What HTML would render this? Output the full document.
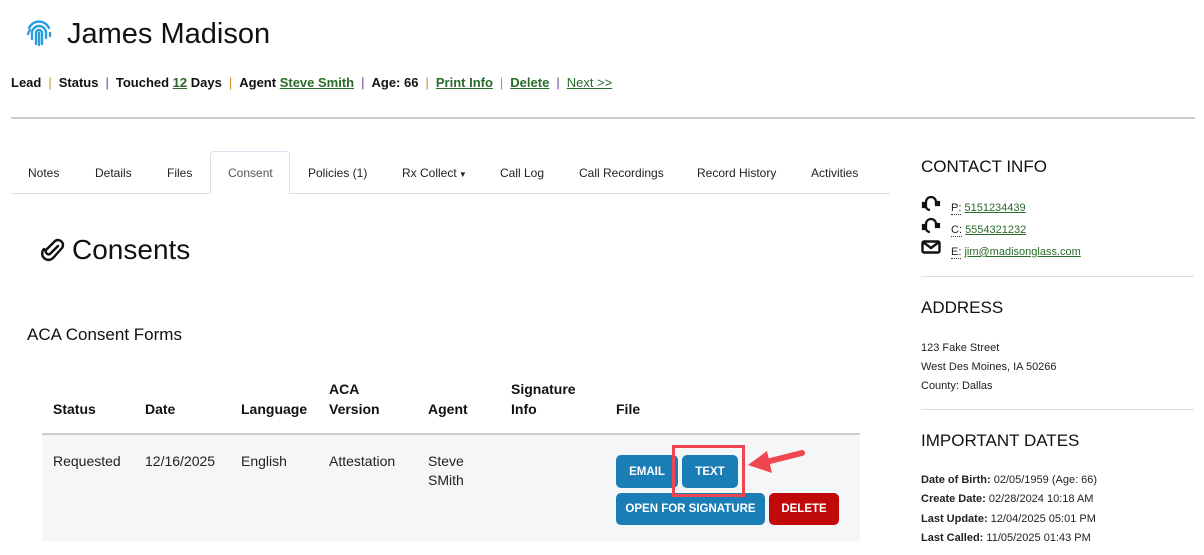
<!DOCTYPE html>
<html><head><style>
*{margin:0;padding:0;box-sizing:border-box}
body{width:1204px;height:555px;overflow:hidden;background:#fff;font-family:"Liberation Sans",sans-serif;color:#111;position:relative}
.a{position:absolute;white-space:nowrap}
a{color:#2a6a2a;text-decoration:underline}
.sep{color:#d08a2a;margin:0 7px;font-weight:normal}
.sep2{color:#6a3a9a;margin:0 7px;font-weight:normal}
.tab{position:absolute;top:166px;font-size:12px;color:#222}
.th{position:absolute;font-size:14px;font-weight:bold;line-height:20px}
.td{position:absolute;font-size:14px;line-height:19px;color:#222}
.btn{position:absolute;border-radius:5px;color:#fff;font-size:11.5px;font-weight:bold;display:flex;align-items:center;justify-content:center}
.side{position:absolute;left:921px;font-size:11px;color:#222}
.h{position:absolute;left:921px;font-size:17px;color:#111}
.dot{border-bottom:1px dotted #333}
</style></head><body>
<svg class="a" style="left:25px;top:19px" width="28" height="28" viewBox="0 0 28 28" fill="none" stroke="#2a9de0" stroke-width="2.4" stroke-linecap="round">
<path d="M4 9 A11 11 0 0 1 24 9"/><path d="M3 15 A11 11 0 0 1 5 11"/><path d="M7 20 V14 A7 7 0 0 1 21 14 V19"/><path d="M11 25 V14 A3 3 0 0 1 17 14 V25"/><path d="M14 14 V26"/><path d="M25 14 V17"/>
</svg>
<div class="a" style="left:67px;top:18px;font-size:29px">James Madison</div>
<div class="a" style="left:11px;top:75px;font-size:13px;font-weight:bold">Lead<span class="sep">|</span>Status<span class="sep2">|</span>Touched <a>12</a> Days<span class="sep">|</span>Agent <a>Steve Smith</a><span class="sep2">|</span>Age: 66<span class="sep">|</span><a>Print Info</a><span class="sep">|</span><a>Delete</a><span class="sep2">|</span><a style="font-weight:normal">Next &gt;&gt;</a></div>
<div class="a" style="left:11px;top:117px;width:1184px;height:2px;background:#ccc"></div>

<div class="a" style="left:11px;top:193px;width:879px;height:1px;background:#dde"></div>
<div class="a" style="left:210px;top:151px;width:80px;height:43px;border:1px solid #dde;border-bottom:1px solid #fff;border-radius:4px 4px 0 0;background:#fff"></div>
<div class="tab" style="left:28px">Notes</div>
<div class="tab" style="left:95px">Details</div>
<div class="tab" style="left:167px">Files</div>
<div class="tab" style="left:228px;color:#555">Consent</div>
<div class="tab" style="left:308px">Policies (1)</div>
<div class="tab" style="left:402px">Rx Collect<span style="font-size:8px"> ▼</span></div>
<div class="tab" style="left:500px">Call Log</div>
<div class="tab" style="left:579px">Call Recordings</div>
<div class="tab" style="left:697px">Record History</div>
<div class="tab" style="left:811px">Activities</div>

<svg class="a" style="left:41px;top:237px" width="26" height="26" viewBox="0 0 26 26" fill="none" stroke="#111" stroke-width="2.4" stroke-linecap="round"><path d="M17 9 L9 17 A3 3 0 0 1 5 13 L14 4 A5 5 0 0 1 21 11 L12 21 A6 6 0 0 1 3 12"/></svg>
<div class="a" style="left:72px;top:234px;font-size:28px">Consents</div>
<div class="a" style="left:27px;top:325px;font-size:17px">ACA Consent Forms</div>

<div class="th" style="left:53px;top:399px">Status</div>
<div class="th" style="left:145px;top:399px">Date</div>
<div class="th" style="left:241px;top:399px">Language</div>
<div class="th" style="left:329px;top:379px">ACA<br>Version</div>
<div class="th" style="left:428px;top:399px">Agent</div>
<div class="th" style="left:511px;top:379px">Signature<br>Info</div>
<div class="th" style="left:616px;top:399px">File</div>
<div class="a" style="left:42px;top:433px;width:818px;height:2px;background:#ccc"></div>
<div class="a" style="left:42px;top:435px;width:818px;height:106px;background:#f5f6f8"></div>
<div class="td" style="left:53px;top:452px">Requested</div>
<div class="td" style="left:145px;top:452px">12/16/2025</div>
<div class="td" style="left:241px;top:452px">English</div>
<div class="td" style="left:329px;top:452px">Attestation</div>
<div class="td" style="left:428px;top:452px">Steve<br>SMith</div>
<div class="btn" style="left:616px;top:455px;width:62px;height:33px;background:#1a7db5">EMAIL</div>
<div class="btn" style="left:682px;top:455px;width:56px;height:33px;background:#1a7db5">TEXT</div>
<div class="btn" style="left:616px;top:493px;width:149px;height:32px;background:#1a7db5">OPEN FOR SIGNATURE</div>
<div class="btn" style="left:769px;top:493px;width:70px;height:32px;background:#c00a0a">DELETE</div>
<div class="a" style="left:672px;top:445px;width:73px;height:52px;border:3px solid #ef4650"></div>
<svg class="a" style="left:744px;top:446px" width="64" height="32" viewBox="0 0 64 32"><path d="M58 7 L22 16" stroke="#ef4650" stroke-width="6" stroke-linecap="round"/><path d="M4 19 L23 5 L28 27 Z" fill="#ef4650"/></svg>

<div class="h" style="top:157px">CONTACT INFO</div>
<svg class="a" style="left:921px;top:195px" width="20" height="17" viewBox="0 0 20 17" fill="none" stroke="#111" stroke-width="2.2"><path d="M5 9 V7 A5 5 0 0 1 15 7 V9"/><rect x="2" y="8" width="3" height="4" fill="#111"/><rect x="15" y="7" width="3" height="3" fill="#111"/><path d="M5 12 Q6 15 9 15"/></svg>
<svg class="a" style="left:921px;top:217px" width="20" height="17" viewBox="0 0 20 17" fill="none" stroke="#111" stroke-width="2.2"><path d="M5 9 V7 A5 5 0 0 1 15 7 V9"/><rect x="2" y="8" width="3" height="4" fill="#111"/><rect x="15" y="7" width="3" height="3" fill="#111"/><path d="M5 12 Q6 15 9 15"/></svg>
<svg class="a" style="left:921px;top:240px" width="20" height="14" viewBox="0 0 20 14" fill="none" stroke="#111" stroke-width="2.4"><rect x="1.5" y="1.5" width="17" height="11" rx="1.5"/><path d="M2 2 L10 8 L18 2"/></svg>
<div class="side" style="left:951px;top:202px"><span class="dot">P:</span> <a>5151234439</a></div>
<div class="side" style="left:951px;top:224px"><span class="dot">C:</span> <a>5554321232</a></div>
<div class="side" style="left:951px;top:246px"><span class="dot">E:</span> <a>jim@madisonglass.com</a></div>
<div class="a" style="left:921px;top:276px;width:273px;height:1px;background:#ddd"></div>
<div class="h" style="top:298px">ADDRESS</div>
<div class="side" style="top:339px;line-height:19px">123 Fake Street<br>West Des Moines, IA 50266<br>County: Dallas</div>
<div class="a" style="left:921px;top:409px;width:273px;height:1px;background:#ddd"></div>
<div class="h" style="top:431px">IMPORTANT DATES</div>
<div class="side" style="top:471px;line-height:19.3px"><b>Date of Birth:</b> 02/05/1959 (Age: 66)<br><b>Create Date:</b> 02/28/2024 10:18 AM<br><b>Last Update:</b> 12/04/2025 05:01 PM<br><b>Last Called:</b> 11/05/2025 01:43 PM</div>
</body></html>
